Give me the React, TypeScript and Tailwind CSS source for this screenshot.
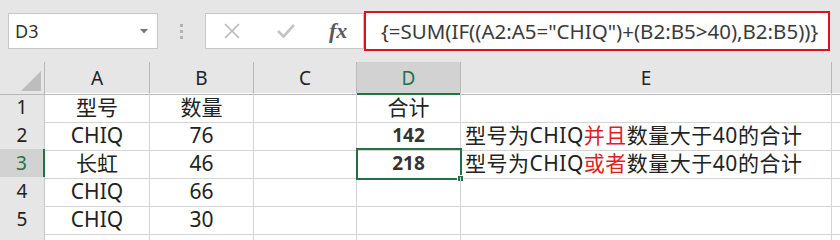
const columns = ["A", "B", "C", "D", "E"];

const rows = [
  { n: "1", a: "型号", b: "数量", d: "合计", e: null },
  { n: "2", a: "CHIQ", b: "76", d: "142", e: ["型号为CHIQ", "并且", "数量大于40的合计"] },
  { n: "3", a: "长虹", b: "46", d: "218", e: ["型号为CHIQ", "或者", "数量大于40的合计"] },
  { n: "4", a: "CHIQ", b: "66", d: "", e: null },
  { n: "5", a: "CHIQ", b: "30", d: "", e: null },
  { n: "", a: "", b: "", d: "", e: null },
];

const gridCols = "grid grid-cols-[45px_105px_104px_103px_104px_371px_8px]";

export default function App() {
  return (
    <div className="h-[240px] w-[840px] overflow-hidden bg-white font-['Noto_Sans','Noto_Sans_CJK_SC',sans-serif] text-[#222]">
      {/* formula bar */}
      <div className="flex h-[62px] items-center bg-[#e6e6e6]">
        <div className="ml-[8px] flex h-[36px] w-[150px] items-center justify-between border border-[#c6c6c6] bg-white pl-[6px] pr-[9px]">
          <span className="text-[18px] leading-none text-[#333]">D3</span>
          <svg width="8" height="5" viewBox="0 0 8 5">
            <path d="M0 0 L8 0 L4 4.5 Z" fill="#777" />
          </svg>
        </div>
        <div className="ml-[20px] flex w-[6px] flex-col items-center gap-[3px]">
          <span className="h-[3px] w-[3px] bg-[#b4b4b4]" />
          <span className="h-[3px] w-[3px] bg-[#b4b4b4]" />
          <span className="h-[3px] w-[3px] bg-[#b4b4b4]" />
        </div>
        <div className="ml-[21px] flex h-[36px] w-[159px] items-center border border-[#c6c6c6] bg-white">
          <svg className="ml-[17px]" width="18" height="18" viewBox="0 0 18 18">
            <path d="M2 2 L16 16 M16 2 L2 16" stroke="#b8b8b8" strokeWidth="1.6" fill="none" />
          </svg>
          <svg className="ml-[35px]" width="20" height="18" viewBox="0 0 20 18">
            <path d="M2 9 L7.5 14.5 L18 3" stroke="#c4c4c4" strokeWidth="2.6" fill="none" />
          </svg>
          <span className="ml-[33px] font-['Liberation_Serif',serif] text-[22px] font-bold italic leading-none text-[#5a5a5a]">
            fx
          </span>
        </div>
        <div className="flex h-[40px] w-[466px] items-center border-2 border-[#d4171f] bg-white pl-[15px]">
          <span className="whitespace-nowrap text-[20.5px] leading-none text-[#3a3a3a]">
            {'{=SUM(IF((A2:A5="CHIQ")+(B2:B5>40),B2:B5))}'}
          </span>
        </div>
      </div>

      {/* column headers */}
      <div className={`${gridCols} h-[31px] bg-[#e6e6e6]`}>
        <div className="relative border-b border-r border-[#b8b8b8]">
          <svg className="absolute bottom-[3px] right-[3px]" width="20" height="20" viewBox="0 0 20 20">
            <path d="M20 0 L20 20 L0 20 Z" fill="#bdbdbd" />
          </svg>
        </div>
        {columns.map((c) =>
          c === "D" ? (
            <div
              key={c}
              className="flex items-center justify-center border-b-2 border-r border-b-[#217346] border-r-[#b8b8b8] bg-[#d2d2d2] pt-[2px] text-[19px] text-[#217346]"
            >
              {c}
            </div>
          ) : (
            <div
              key={c}
              className="flex items-center justify-center border-b border-r border-[#b8b8b8] text-[19px] text-[#222]"
            >
              {c}
            </div>
          )
        )}
        <div className="border-b border-[#b8b8b8]" />
      </div>

      {/* rows */}
      {rows.map((r) => {
        const selectedRow = r.n === "3";
        return (
          <div key={r.n || "x"} className={`${gridCols} h-[28px]`}>
            <div
              className={
                selectedRow
                  ? "flex items-center justify-center border-b border-r-2 border-b-[#c8c8c8] border-r-[#217346] bg-[#d2d2d2] text-[19px] text-[#217346]"
                  : "flex items-center justify-center border-b border-r border-[#c8c8c8] bg-[#e6e6e6] text-[19px] text-[#222]"
              }
            >
              {r.n}
            </div>
            <div className="flex items-center justify-center border-b border-r border-[#d4d4d4] text-[21px] leading-none">
              {r.a}
            </div>
            <div className="flex items-center justify-center border-b border-r border-[#d4d4d4] text-[21px] leading-none">
              {r.b}
            </div>
            <div className="border-b border-r border-[#d4d4d4]" />
            <div
              className={`relative flex items-center justify-center border-b border-r border-[#d4d4d4] text-[19px] leading-none ${
                r.n === "1" ? "text-[21px]" : "font-bold text-[#333]"
              } ${selectedRow ? "outline-2 -outline-offset-1 outline-[#217346]" : ""}`}
            >
              {r.d}
              {selectedRow && (
                <span className="absolute -bottom-[4px] -right-[4px] h-[7px] w-[7px] border border-white bg-[#217346]" />
              )}
            </div>
            <div className="flex items-center whitespace-nowrap border-b border-r border-[#d4d4d4] pl-[4px] text-[21px] leading-none tracking-[0.5px]">
              {r.e && (
                <>
                  <span>{r.e[0]}</span>
                  <span className="text-[#e0201e]">{r.e[1]}</span>
                  <span>{r.e[2]}</span>
                </>
              )}
            </div>
            <div className="border-b border-[#d4d4d4]" />
          </div>
        );
      })}
    </div>
  );
}
